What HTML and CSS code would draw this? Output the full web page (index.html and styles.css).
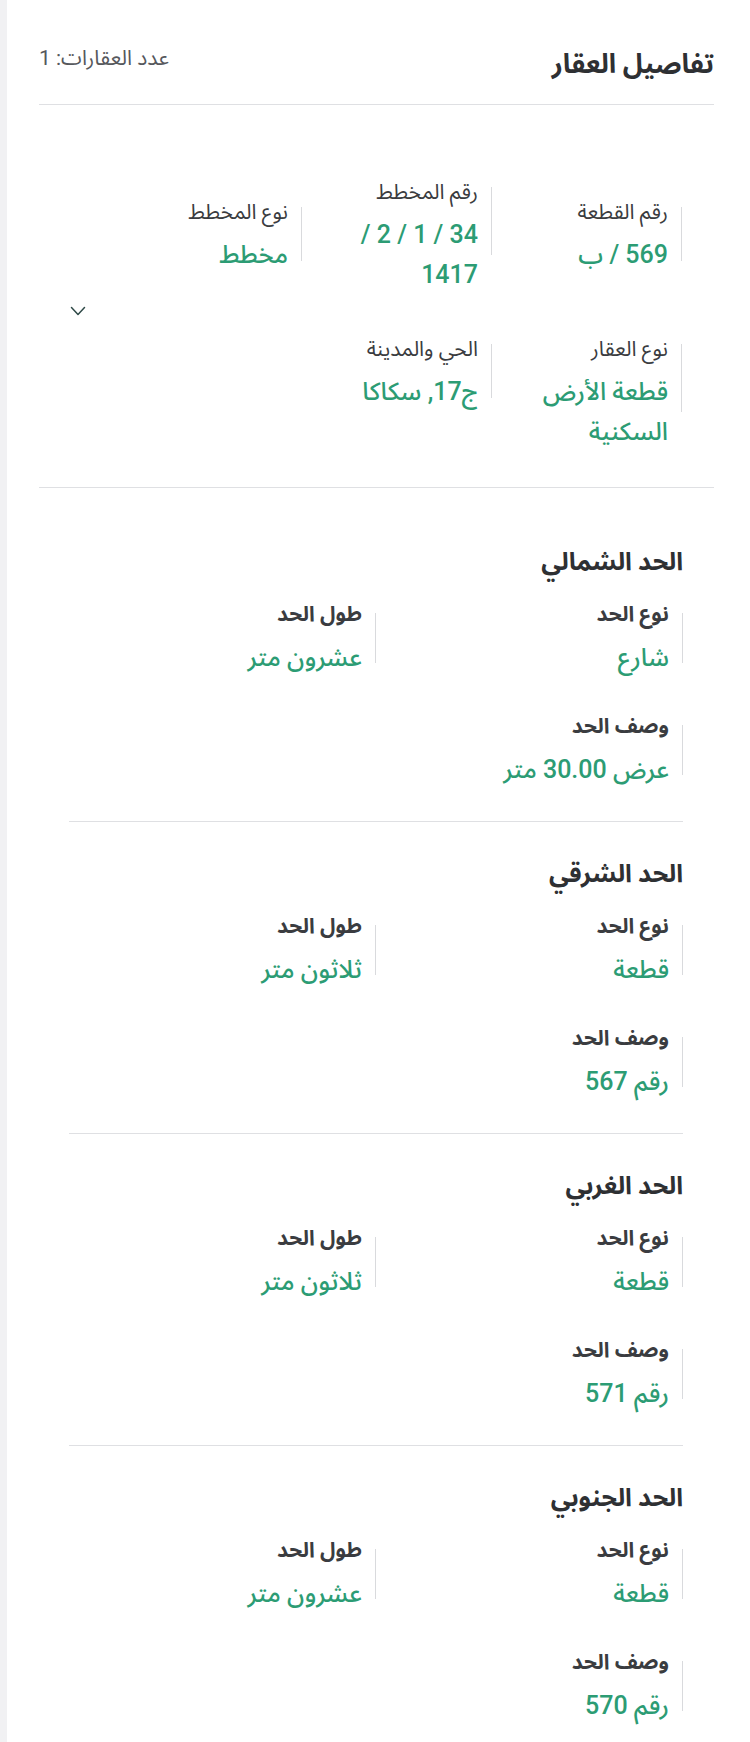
FILE: index.html
```html
<!DOCTYPE html>
<html lang="ar" dir="rtl">
<head>
    <meta charset="UTF-8">
    <meta name="viewport" content="width=device-width, initial-scale=1.0">
    <title>تفاصيل العقار</title>
    <link rel="stylesheet" href="styles.css">
</head>
<body>

<main class="card">
    <header class="card-head">
        <h1>تفاصيل العقار</h1>
        <span class="count">عدد العقارات: 1</span>
    </header>

    <section class="property">
        <div class="field-row row-center">
            <div class="field">
                <span class="label">رقم القطعة</span>
                <span class="value">569 / ب</span>
            </div>
            <div class="field">
                <span class="label">رقم المخطط</span>
                <span class="value">34 / 1 / 2 /<br>1417</span>
            </div>
            <div class="field">
                <span class="label">نوع المخطط</span>
                <span class="value">مخطط</span>
            </div>
        </div>

        <div class="toggle-row">
            <button type="button" class="toggle" aria-label="عرض المزيد">
                <svg width="16" height="10" viewBox="0 0 16 10" fill="none" stroke="#2f4a48" stroke-width="1.5" stroke-linecap="round" stroke-linejoin="round">
                    <path d="M1.5 1.5 L8 8.5 L14.5 1.5"/>
                </svg>
            </button>
        </div>

        <div class="field-row row-top">
            <div class="field">
                <span class="label">نوع العقار</span>
                <span class="value">قطعة الأرض<br>السكنية</span>
            </div>
            <div class="field">
                <span class="label">الحي والمدينة</span>
                <span class="value">ج17, سكاكا</span>
            </div>
        </div>
    </section>

    <section class="boundaries">
        <article class="boundary">
            <h2>الحد الشمالي</h2>
            <div class="boundary-grid">
                <div class="field">
                    <span class="label">نوع الحد</span>
                    <span class="value">شارع</span>
                </div>
                <div class="field">
                    <span class="label">طول الحد</span>
                    <span class="value">عشرون متر</span>
                </div>
                <div class="field">
                    <span class="label">وصف الحد</span>
                    <span class="value">عرض 30.00 متر</span>
                </div>
            </div>
        </article>

        <article class="boundary">
            <h2>الحد الشرقي</h2>
            <div class="boundary-grid">
                <div class="field">
                    <span class="label">نوع الحد</span>
                    <span class="value">قطعة</span>
                </div>
                <div class="field">
                    <span class="label">طول الحد</span>
                    <span class="value">ثلاثون متر</span>
                </div>
                <div class="field">
                    <span class="label">وصف الحد</span>
                    <span class="value">رقم 567</span>
                </div>
            </div>
        </article>

        <article class="boundary">
            <h2>الحد الغربي</h2>
            <div class="boundary-grid">
                <div class="field">
                    <span class="label">نوع الحد</span>
                    <span class="value">قطعة</span>
                </div>
                <div class="field">
                    <span class="label">طول الحد</span>
                    <span class="value">ثلاثون متر</span>
                </div>
                <div class="field">
                    <span class="label">وصف الحد</span>
                    <span class="value">رقم 571</span>
                </div>
            </div>
        </article>

        <article class="boundary">
            <h2>الحد الجنوبي</h2>
            <div class="boundary-grid">
                <div class="field">
                    <span class="label">نوع الحد</span>
                    <span class="value">قطعة</span>
                </div>
                <div class="field">
                    <span class="label">طول الحد</span>
                    <span class="value">عشرون متر</span>
                </div>
                <div class="field">
                    <span class="label">وصف الحد</span>
                    <span class="value">رقم 570</span>
                </div>
            </div>
        </article>
    </section>
</main>

</body>
</html>
```

FILE: styles.css
```css
body {
    margin: 0;
    padding: 0;
    background: #fff;
    font-family: Roboto, "Noto Sans Arabic", "DejaVu Sans", sans-serif;
    color: #33363a;
}
.card {
    border-left: 7px solid #f1f1f3;
    padding: 0 36px 0 32px;
    min-height: 100vh;
    box-sizing: border-box;
}

/* header */
.card-head {
    display: flex;
    justify-content: space-between;
    align-items: flex-start;
    padding: 46px 0 22px;
    border-bottom: 1px solid #dfe0e3;
}
.card-head h1 {
    margin: 0;
    font-size: 27px;
    line-height: 36px;
    font-weight: bold;
    color: #2e3033;
}
.count {
    font-size: 21px;
    line-height: 24px;
    color: #56585c;
}

/* fields */
.field {
    position: relative;
    display: flex;
    flex-direction: column;
    padding-right: 14px;
}
.field::before {
    content: "";
    position: absolute;
    right: 0;
    top: 10px;
    width: 1px;
    height: min(calc(100% - 24px), 68px);
    background: #d9dadd;
}
.label {
    font-size: 21px;
    line-height: 30px;
    color: #3a3c40;
    margin-bottom: 8px;
}
.value {
    font-size: 25px;
    line-height: 40px;
    font-weight: 500;
    color: #2c9c74;
}

/* property block */
.property {
    padding: 72px 32px 35px 0;
    border-bottom: 1px solid #dfe0e3;
}
.field-row {
    display: grid;
    grid-template-columns: repeat(3, 190px);
}
.row-center {
    align-items: center;
}
.row-top {
    align-items: start;
}
.toggle-row {
    display: flex;
    justify-content: flex-end;
    padding: 10px 0 17px;
}
.toggle {
    display: block;
    margin: 0 0 0 31px;
    padding: 0;
    border: none;
    background: none;
    height: 12px;
    cursor: pointer;
}
.toggle svg {
    display: block;
}

/* boundaries */
.boundaries {
    padding: 22px 31px 0 30px;
}
.boundary {
    padding: 36px 0 32px;
    border-bottom: 1px solid #dfe0e3;
}
.boundary:last-child {
    border-bottom: none;
}
.boundary h2 {
    margin: 0 0 21px;
    font-size: 25px;
    line-height: 32px;
    font-weight: bold;
    color: #2e3033;
}
.boundary-grid {
    display: grid;
    grid-template-columns: 1fr 1fr;
    row-gap: 34px;
}
.boundary-grid .field::before {
    top: 14px;
    height: 50px;
}
.boundary-grid .label {
    font-weight: bold;
    margin-bottom: 10px;
}
.boundary-grid .value {
    line-height: 38px;
}
```
